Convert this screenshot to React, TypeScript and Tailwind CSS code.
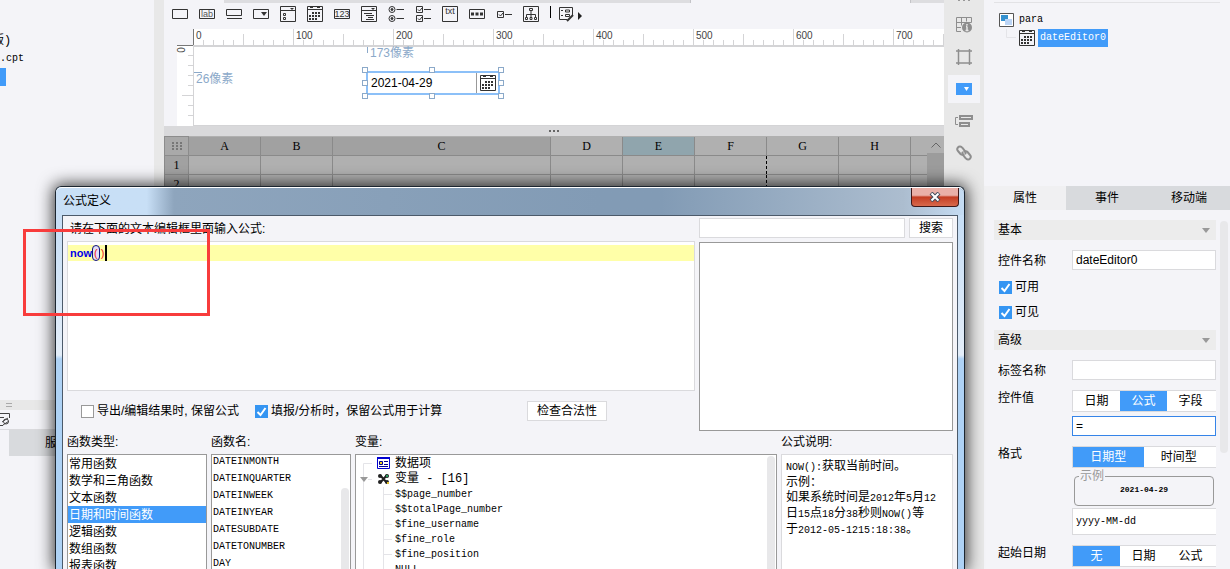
import { useState } from 'react'
import type { ReactNode } from 'react'

const MONO = "font-['Liberation_Mono','Noto_Sans_CJK_SC',monospace]"

const functionTypes = [
  '常用函数',
  '数学和三角函数',
  '文本函数',
  '日期和时间函数',
  '逻辑函数',
  '数组函数',
  '报表函数'
]

const functionNames = [
  'DATEINMONTH',
  'DATEINQUARTER',
  'DATEINWEEK',
  'DATEINYEAR',
  'DATESUBDATE',
  'DATETONUMBER',
  'DAY'
]

const variables = [
  '$$page_number',
  '$$totalPage_number',
  '$fine_username',
  '$fine_role',
  '$fine_position',
  'NULL'
]

const columns = [
  { name: 'A', width: 'w-[72px]', color: 'bg-[#a1a1a1]' },
  { name: 'B', width: 'w-[72px]', color: 'bg-[#a1a1a1]' },
  { name: 'C', width: 'w-[218px]', color: 'bg-[#a1a1a1]' },
  { name: 'D', width: 'w-[72px]', color: 'bg-[#b0b0b0]' },
  { name: 'E', width: 'w-[72px]', color: 'bg-[#90a5ad]' },
  { name: 'F', width: 'w-[72px]', color: 'bg-[#b0b0b0]' },
  { name: 'G', width: 'w-[72px]', color: 'bg-[#b0b0b0]' },
  { name: 'H', width: 'w-[72px]', color: 'bg-[#b0b0b0]' }
]

function Icon({ children }: { children: ReactNode }) {
  return (
    <svg
      width="16"
      height="16"
      viewBox="0 0 16 16"
      fill="none"
      stroke="#333"
      className="block shrink-0"
    >
      {children}
    </svg>
  )
}

function CalendarIcon() {
  return (
    <Icon>
      <path d="M.5.5h15v15H.5zM.5 3.500h15" />
      <path d="M3 1.500h3M10 1.500h3" />
      <path
        d="M5 7h2M8 7h2M11 7h2M2 10h2M5 10h2M8 10h2M11 10h2M2 13h2M5 13h2M8 13h2"
        strokeWidth="2"
      />
    </Icon>
  )
}

const widgetTools: { label: string; icon: ReactNode }[] = [
  {
    label: '文本',
    icon: (
      <Icon>
        <path d="M.5 3.5h15v9H.5z" />
      </Icon>
    )
  },
  {
    label: '标签',
    icon: (
      <Icon>
        <path d="M.5 3.5h15v9H.5z" />
        <text x="8" y="11" textAnchor="middle" fontSize="9" fill="#555" stroke="none">
          lab
        </text>
      </Icon>
    )
  },
  {
    label: '按钮',
    icon: (
      <Icon>
        <path d="M.5 3.5h15v6H.5zM1 12.5h15" />
      </Icon>
    )
  },
  {
    label: '下拉框',
    icon: (
      <Icon>
        <path d="M.5 3.5h15v9H.5z" />
        <path d="M8 6h6l-3 4z" fill="#333" stroke="none" />
      </Icon>
    )
  },
  {
    label: '下拉复选框',
    icon: (
      <Icon>
        <path d="M.5.5h15v15H.5zM.5 4.5h15M3.5 7.5h2v2h-2zM3.5 11.5h2v2h-2z" />
        <path d="M10 2h4l-2 2z" fill="#333" stroke="none" />
      </Icon>
    )
  },
  { label: '日期', icon: <CalendarIcon /> },
  {
    label: '数字',
    icon: (
      <Icon>
        <path d="M.5 3.5h15v9H.5z" />
        <text x="8" y="11" textAnchor="middle" fontSize="9" fill="#333" stroke="none">
          123
        </text>
      </Icon>
    )
  },
  {
    label: '下拉树',
    icon: (
      <Icon>
        <path d="M.5.5h15v15H.5zM.5 4.5h15M3 7.5h8M5 9.5h8M7 11.5h5M5 13.5h8" />
        <path d="M10 2h4l-2 2z" fill="#333" stroke="none" />
      </Icon>
    )
  },
  {
    label: '单选按钮组',
    icon: (
      <Icon>
        <circle cx="4" cy="3.5" r="3" />
        <circle cx="4" cy="3.5" r="1" fill="#333" />
        <circle cx="4" cy="12.5" r="3" />
        <circle cx="4" cy="12.5" r="1" fill="#333" />
        <path d="M8.500 3.500H16M8.500 12.500H16" />
      </Icon>
    )
  },
  {
    label: '复选框组',
    icon: (
      <Icon>
        <path d="M1.500.5h6v6h-6zM1.500 9.500h6v6h-6zM9 3.500h7M9 12.500h7M3 3.500l1.500 1.500L7 2M3 12.500l1.500 1.500L7 11" />
      </Icon>
    )
  },
  {
    label: '文本域',
    icon: (
      <Icon>
        <path d="M.5.5h15v15H.5z" />
        <text x="8" y="8" textAnchor="middle" fontSize="9" fill="#333" stroke="none">
          txt
        </text>
      </Icon>
    )
  },
  {
    label: '密码',
    icon: (
      <Icon>
        <path d="M.5 3.5h15v9H.5z" />
        <path d="M2 8h3M6.500 8h3M11 8h3" strokeWidth="3" />
      </Icon>
    )
  },
  {
    label: '复选框',
    icon: (
      <Icon>
        <path d="M1.500 5.500h6v6h-6zM9 8.500h7M3 8.500l1.500 1.500L7 7" />
      </Icon>
    )
  },
  {
    label: '视图树',
    icon: (
      <Icon>
        <path d="M.5.5h15v15H.5zM6.500 2.500h3v2h-3zM8 5v3M3.500 11V8.500h9V11M8 8v3M2.500 11.500h2v2h-2zM7 11.500h2v2H7zM11.500 11.500h2v2h-2z" />
      </Icon>
    )
  }
]

function Ruler() {
  return (
    <div className="flex h-[18px] overflow-hidden border-b-2 border-[#d4d4d6] bg-white">
      {[0, 100, 200, 300, 400, 500, 600, 700].map((n) => (
        <div
          key={n}
          className="relative h-4 w-[100px] shrink-0 text-[10px] leading-[14px] text-[#444]"
        >
          <svg width="100" height="16" className="absolute inset-0" stroke="#d4d4d6">
            <path d="M10.500 11v5M20.500 11v5M30.500 11v5M40.500 11v5M50.500 5v11M60.500 11v5M70.500 11v5M80.500 11v5M90.500 11v5" />
            <path d="M.5 0v16" stroke={n === 0 ? '#777' : '#d4d4d6'} />
          </svg>
          <span className="pl-[3px]">{n}</span>
        </div>
      ))}
    </div>
  )
}

function Handle({ place }: { place: string }) {
  return (
    <span
      className={`absolute size-1.5 border border-[#8ba9c9] bg-white ${place}`}
    />
  )
}

function DesignCanvas() {
  return (
    <div className="flex h-24 pl-[13px]">
      <div className="relative w-4 shrink-0 bg-white">
        <svg width="16" height="80" stroke="#d4d4d6" className="block">
          <path d="M0 .5h16" stroke="#777" />
          <path d="M11 10.500h5M11 20.500h5M11 30.500h5M11 40.500h5M5 50.500h11M11 60.500h5M11 70.500h5" />
        </svg>
        <span className="absolute top-0 left-0.5 -rotate-90 text-[10px] leading-[10px] text-[#444]">
          0
        </span>
      </div>
      <div className="flex min-w-0 flex-1 flex-col">
        {/* free canvas: items are placed where the user dropped them */}
        <div className="relative h-[81px] border-t-2 border-b border-l border-[#d4d4d6] bg-white">
          <span className="absolute top-0 left-[173px] h-1.5 w-px bg-[#8ba9c9]" />
          <span className="absolute -top-0.5 left-[176px] text-[12px] leading-4 text-[#8ba9c9]">
            173像素
          </span>
          <span className="absolute top-[25px] left-0 h-px w-2 bg-[#8ba9c9]" />
          <span className="absolute top-6 left-0.5 text-[12px] leading-4 text-[#8ba9c9]">
            26像素
          </span>
          <div className="absolute top-6 left-[172px] flex h-6 w-[134px] border-2 border-[#8cc0f8] bg-white">
            <input
              aria-label="日期控件"
              defaultValue="2021-04-29"
              className="min-w-0 flex-1 px-[3px] text-[12px] outline-none"
            />
            <button
              aria-label="选择日期"
              className="flex w-[22px] items-center justify-center border-l border-[#999]"
            >
              <CalendarIcon />
            </button>
            <Handle place="-top-1.5 -left-1.5" />
            <Handle place="-top-1.5 left-[61px]" />
            <Handle place="-top-1.5 -right-1.5" />
            <Handle place="top-[7px] -left-1.5" />
            <Handle place="top-[7px] -right-1.5" />
            <Handle place="-bottom-1.5 -left-1.5" />
            <Handle place="-bottom-1.5 left-[61px]" />
            <Handle place="-bottom-1.5 -right-1.5" />
          </div>
        </div>
      </div>
    </div>
  )
}

function Sheet() {
  return (
    <div className="flex min-h-0 flex-1 overflow-hidden bg-[#b0b0b0]">
      <table className="h-14 w-full table-fixed border-collapse font-['Liberation_Serif',serif] text-[12px] leading-4">
        <thead>
          <tr className="h-[19px]">
            <th className="w-6 border border-[#8c8c8c] bg-[#a9a9a9] p-0">
              <svg width="10" height="8" className="mx-auto block" fill="#777">
                <path d="M0 0h2v2H0zM4 0h2v2H4zM8 0h2v2H8zM0 3h2v2H0zM4 3h2v2H4zM8 3h2v2H8zM0 6h2v2H0zM4 6h2v2H4zM8 6h2v2H8z" />
              </svg>
            </th>
            {columns.map((c) => (
              <th
                key={c.name}
                className={`border border-t-0 border-[#8a8a8a] p-0 font-normal ${c.width} ${c.color}`}
              >
                {c.name}
              </th>
            ))}
            <th className="border-b border-[#8a8a8a] p-0" />
          </tr>
        </thead>
        <tbody>
          {[1, 2].map((row) => (
            <tr key={row} className="h-[19px]">
              <th className="border border-[#8a8a8a] bg-[#a1a1a1] p-0 font-normal">
                {row}
              </th>
              {columns.map((c) => (
                <td
                  key={c.name}
                  className={
                    c.name === 'G'
                      ? 'border border-[#8a8a8a] border-l-black [border-left-style:dashed]'
                      : c.name === 'F'
                        ? 'border border-r-0 border-[#8a8a8a]'
                        : 'border border-[#8a8a8a]'
                  }
                />
              ))}
              <td className="border-b border-[#8a8a8a]" />
            </tr>
          ))}
        </tbody>
      </table>
      <div className="w-[17px] shrink-0 bg-[#9c9c9c]">
        <button
          aria-label="向上滚动"
          className="flex h-[17px] w-full items-center justify-center bg-[#b0b0b0]"
        >
          <svg width="10" height="6" fill="none" stroke="#666">
            <path d="M.5 5.500l4.500-4.500 4.500 4.500" />
          </svg>
        </button>
      </div>
    </div>
  )
}

function SideTools() {
  const base = 'flex h-7 w-8 items-center justify-center'
  return (
    <nav className="flex w-10 shrink-0 flex-col items-center gap-1 bg-[#e8e8e8]">
      <svg width="12" height="7" className="block" fill="#999">
        <path d="M0 0h2v1H0zM5 0h2v1H5zM10 0h2v1h-2z" />
      </svg>
      <button aria-label="单元格属性" className={base}>
        <svg width="16" height="16" fill="none" stroke="#8e8e8e">
          <path d="M5 14.500H.5V.5h15v5M.5 5.500h15M.5 10.500H5M5.500.5v8M10.500.5v4" />
          <circle cx="11" cy="10.500" r="5" fill="#8e8e8e" stroke="none" />
          <path d="M11 7v1.500M11 9.500v4M9.500 13.500h3M10 9.500h1" stroke="#e8e8e8" strokeWidth="1.500" />
        </svg>
      </button>
      <button aria-label="悬浮元素" className={base}>
        <svg width="16" height="16" fill="none" stroke="#8e8e8e">
          <path d="M2.500 0v16M13.500 0v16M0 2h16M0 14h16" strokeWidth="1.500" />
        </svg>
      </button>
      <button aria-label="控件设置" className={`${base} bg-[#f4f4f8]`}>
        <svg width="16" height="12">
          <path d="M0 0h16v12H0z" fill="#419bf9" />
          <path d="M8 4h5l-2.500 4z" fill="#fff" />
        </svg>
      </button>
      <button aria-label="条件属性" className={base}>
        <svg width="18" height="14" fill="none" stroke="#8e8e8e">
          <path d="M3 3.500H.5v7H3" />
          <path d="M5 2h12v3H5zM5 9h9v3H5z" strokeWidth="2" />
        </svg>
      </button>
      <button aria-label="超级链接" className={base}>
        <svg
          width="16"
          height="16"
          fill="none"
          stroke="#8e8e8e"
          strokeWidth="2"
          strokeLinecap="round"
        >
          <path d="M9.500 8.500a3 3 0 0 0-.5-2.500L6.500 3C5 1 3 1 2 2.300S1 5 2 6l2.500 3c1 1 2 1 3 .5" />
          <path d="M6.500 7.500a3 3 0 0 0 .5 2.500l2.500 3c1.500 2 3.500 2 4.500.7s1-2.700 0-3.700l-2.500-3c-1-1-2-1-3-.5" />
        </svg>
      </button>
    </nav>
  )
}

function Checkbox({ label, checked }: { label: string; checked?: boolean }) {
  return (
    <label className="flex items-center gap-[3px] text-[12px] leading-4">
      <span className="relative flex">
        <input
          type="checkbox"
          defaultChecked={checked}
          className="peer size-[13px] appearance-none border border-[#999] bg-white checked:border-[#3595f2] checked:bg-[#3595f2]"
        />
        <svg
          width="13"
          height="13"
          fill="none"
          stroke="#fff"
          strokeWidth="2"
          className="pointer-events-none invisible absolute inset-0 peer-checked:visible"
        >
          <path d="M2.500 7l3 3L10.500 3" />
        </svg>
      </span>
      {label}
    </label>
  )
}

function Segmented({ options, active }: { options: string[]; active: string }) {
  const [value, setValue] = useState(active)
  return (
    <div className="flex h-[22px] border border-r-0 border-[#dadadd] bg-white pr-0.5">
      {options.map((option) => (
        <button
          key={option}
          onClick={() => setValue(option)}
          className={
            option === value
              ? 'flex-1 bg-[#419bf9] text-[12px] leading-4 text-white'
              : 'flex-1 text-[12px] leading-4'
          }
        >
          {option}
        </button>
      ))}
    </div>
  )
}

function SectionTitle({ children }: { children: ReactNode }) {
  return (
    <button className="flex h-5 w-full items-center justify-between bg-[#ececec] pr-1.5 pl-1 text-[12px] leading-4">
      {children}
      <svg width="8" height="5" fill="#999">
        <path d="M0 0h8l-4 5z" />
      </svg>
    </button>
  )
}

function FormRow({
  label,
  tall,
  children
}: {
  label: string
  tall?: boolean
  children: ReactNode
}) {
  return (
    <div className="flex" role="group" aria-label={label}>
      <span
        className={
          tall
            ? 'w-[78px] shrink-0 pl-1 text-[12px] leading-4'
            : 'w-[78px] shrink-0 pl-1 text-[12px] leading-[22px]'
        }
      >
        {label}
      </span>
      <div className="flex min-w-0 flex-1 flex-col">{children}</div>
    </div>
  )
}

function PropertyPanel() {
  const input = 'h-5 w-full border border-[#dadadd] bg-white px-[3px] text-[12px] outline-none'
  return (
    <aside className="flex w-[246px] shrink-0 flex-col bg-[#f4f4f8]">
      <div className="h-[186px] shrink-0 px-2.5 pt-0.5">
        <div className={`border-t border-[#e2e2e5] pt-2 pl-[5px] text-[10px] leading-[18px] ${MONO}`}>
          <div className="flex items-center gap-1">
            <svg width="16" height="16" className="shrink-0">
              <path d="M.5 1.500h14v13H.5z" fill="#fff" stroke="#555" />
              <path d="M2 3h7v6H2z" fill="#3390cf" />
              <path d="M6 7h7v6H6z" fill="#bbd4f5" />
            </svg>
            <span>para</span>
          </div>
          <div className="flex items-center gap-[3px] pl-1.5">
            <svg width="11" height="18" fill="none" stroke="#e4e4e8" className="shrink-0">
              <path d="M1.500 0v8.500H11" />
            </svg>
            <CalendarIcon />
            <span className="bg-[#419bf9] px-0.5 text-white">dateEditor0</span>
          </div>
        </div>
      </div>

      <div className="flex h-6 shrink-0 text-[12px] leading-4" role="tablist">
        <button role="tab" aria-selected className="flex-1 bg-[#f0f0f2]">
          属性
        </button>
        <button role="tab" className="flex-1 bg-[#d8dadd]">
          事件
        </button>
        <button role="tab" className="flex-1 bg-[#d8dadd]">
          移动端
        </button>
      </div>

      <div className="flex min-h-0 flex-1 gap-1 overflow-hidden pt-2.5 pr-0.5 pl-2.5">
        <div className="min-w-0 flex-1">
          <SectionTitle>基本</SectionTitle>
          <div className="h-[90px] pt-2.5">
            <FormRow label="控件名称">
              <input aria-label="控件名称" defaultValue="dateEditor0" className={input} />
            </FormRow>
            <div className="flex flex-col gap-[9px] pt-[7px] pl-[5px]">
              <Checkbox label="可用" checked />
              <Checkbox label="可见" checked />
            </div>
          </div>
          <SectionTitle>高级</SectionTitle>
          <div className="flex flex-col gap-2 pt-2.5">
            <FormRow label="标签名称">
              <input aria-label="标签名称" className={input} />
            </FormRow>
            <FormRow label="控件值" tall>
              <Segmented options={['日期', '公式', '字段']} active="公式" />
              <input
                aria-label="控件值"
                defaultValue="="
                className="mt-1 mb-0.5 h-5 w-full border border-[#3584e8] bg-white px-[3px] text-[12px] outline-none"
              />
            </FormRow>
            <FormRow label="格式" tall>
              <Segmented options={['日期型', '时间型']} active="日期型" />
              <fieldset className="mx-0.5 h-[38px] rounded border border-[#999]">
                <legend className="ml-1 px-px text-[12px] leading-4 text-[#999]">示例</legend>
                <p className={`text-center text-[8px] leading-3 font-bold ${MONO}`}>
                  2021-04-29
                </p>
              </fieldset>
              <input
                aria-label="日期格式"
                defaultValue="yyyy-MM-dd"
                className={`mt-0.5 mb-0.5 h-[27px] w-full border border-r-0 border-[#dadadd] bg-white px-[3px] text-[10px] outline-none ${MONO}`}
              />
            </FormRow>
            <FormRow label="起始日期" tall>
              <Segmented options={['无', '日期', '公式']} active="无" />
            </FormRow>
          </div>
        </div>
        <div className="mt-px h-[232px] w-2 rounded bg-[#e8e8ea]" />
      </div>
    </aside>
  )
}

function FormulaEditor() {
  const [formula, setFormula] = useState('now()')
  return (
    <div className="relative h-[150px] border border-[#dadadd] bg-white pt-[3px]">
      <div className="flex h-4 items-center bg-[#ffffa8] pl-0.5 text-[11px] leading-[14px] text-[#f02020]">
        <b className="text-[#0000e8]">now</b>
        <span className="rounded-full border border-[#101080] bg-[#e0e0f8] px-px">(</span>
        <span className="px-px">)</span>
        <span className="h-4 w-0.5 bg-black" />
      </div>
      <textarea
        aria-label="公式"
        value={formula}
        onChange={(e) => setFormula(e.target.value)}
        className="absolute inset-0 size-full resize-none bg-transparent px-0.5 py-[3px] text-[11px] leading-4 text-transparent caret-transparent outline-none"
      />
    </div>
  )
}

function FormulaDialog() {
  const [type, setType] = useState('日期和时间函数')
  const whiteButton = 'border border-[#dadadd] bg-white text-[12px] leading-4'
  const list = 'min-h-0 flex-1 overflow-hidden border border-b-0 border-[#999] bg-white'
  return (
    <section
      role="dialog"
      aria-label="公式定义"
      className="absolute top-[186px] right-[265px] bottom-0 left-[55px] flex flex-col rounded-t-md border border-b-0 border-[#1c2630] bg-linear-to-b from-[#c8dff6] from-10% via-[#e4eef9] via-44% to-[#aed2f5] to-45% shadow-[0_0_16px_2px_rgba(0,0,0,0.75)]"
    >
      <header className="flex h-7 shrink-0 items-start justify-between rounded-t-md border-t border-white bg-linear-to-r from-[#c8dff6] from-10% via-[#8ea5bd] via-13% to-[#829bb5] to-60%">
        <h1 className="pl-[7px] text-[12px] leading-[26px]">公式定义</h1>
        <div className="flex h-full w-1/3 justify-end rounded-tr-md bg-linear-to-r from-[#829bb5] via-[#acbdcf] via-80% to-[#c5dcf3] pr-[5px]">
          <button
            aria-label="关闭"
            className="flex h-[19px] w-12 items-center justify-center rounded-b border border-t-0 border-[#401818] bg-linear-to-b from-[#eab0a8] from-40% via-[#c43c22] via-50% to-[#d8694c]"
          >
            <svg width="12" height="10" fill="none">
              <path d="M2 1l8 8M10 1l-8 8" stroke="#444c5c" strokeWidth="4" />
              <path d="M2.500 1.500l7 7M9.500 1.500l-7 7" stroke="#fff" strokeWidth="2" />
            </svg>
          </button>
        </div>
      </header>

      <div className="mx-1.5 flex min-h-0 flex-1 flex-col overflow-hidden border border-b-0 border-[#4c5a6a] bg-[#f4f4f8] px-1">
        <div className="flex gap-1">
          <div className="min-w-0 flex-1">
            <p className="h-[25px] pl-[3px] text-[12px] leading-[26px]">
              请在下面的文本编辑框里面输入公式:
            </p>
            <FormulaEditor />
            <div className="flex h-10 items-center gap-4 pl-3.5">
              <Checkbox label="导出/编辑结果时, 保留公式" />
              <Checkbox label="填报/分析时，保留公式用于计算" checked />
              <button className={`mr-[88px] ml-auto h-5 w-20 ${whiteButton}`}>
                检查合法性
              </button>
            </div>
          </div>
          <div className="flex w-[254px] shrink-0 flex-col gap-1 pt-0.5">
            <div className="flex h-5 gap-1">
              <input
                aria-label="搜索函数"
                className="min-w-0 flex-1 border border-[#dadadd] bg-white px-[3px] text-[12px] outline-none"
              />
              <button className={`w-11 ${whiteButton}`}>搜索</button>
            </div>
            <div className="flex-1 border border-[#999] bg-white" />
          </div>
        </div>

        <div className="flex min-h-0 flex-1 gap-1 text-[12px]">
          <div className="flex w-[140px] shrink-0 flex-col">
            <h2 className="leading-[23px]">函数类型:</h2>
            <ul className={list}>
              {functionTypes.map((name) => (
                <li key={name}>
                  <button
                    onClick={() => setType(name)}
                    className={
                      name === type
                        ? 'block h-[17px] w-full bg-[#419bf9] px-px text-left leading-[18px] text-white'
                        : 'block h-[17px] w-full px-px text-left leading-[18px]'
                    }
                  >
                    {name}
                  </button>
                </li>
              ))}
            </ul>
          </div>
          <div className="flex w-[140px] shrink-0 flex-col">
            <h2 className="leading-[23px]">函数名:</h2>
            <div className={`flex justify-between ${list}`}>
              <ul className={`pl-px text-[10px] ${MONO}`}>
                {functionNames.map((name) => (
                  <li key={name} className="h-[17px] leading-[14px]">
                    {name}
                  </li>
                ))}
              </ul>
              <div className="mt-[33px] mr-px w-2 rounded-t bg-[#e8e8ea]" />
            </div>
          </div>
          <div className="flex min-w-0 flex-1 flex-col">
            <h2 className="leading-[23px]">变量:</h2>
            <div className={`flex justify-between ${list}`}>
              <ul className="pl-1">
                <li className="flex h-4 items-center gap-[5px] leading-4">
                  <svg width="12" height="16" fill="none" stroke="#e4e4e8">
                    <path d="M3.500 16V8.500H12" />
                  </svg>
                  <svg width="13" height="12">
                    <path d="M.5.5h12v11H.5z" fill="#fff" stroke="#0000d0" />
                    <path d="M0 1h13" stroke="#0000d0" strokeWidth="2" />
                    <path d="M2.500 4.500h3v3h-3z" fill="#f0d820" stroke="#000090" />
                    <path d="M7 4.500h4M7 7.500h4M2 9.500h9" stroke="#000090" />
                  </svg>
                  数据项
                </li>
                <li className="flex h-4 items-center gap-[5px] leading-4">
                  <svg width="12" height="16">
                    <path d="M3.500 0v16M8 8.500h4" stroke="#e4e4e8" />
                    <path d="M0 6h8l-4 5z" fill="#999" />
                  </svg>
                  <svg width="13" height="12" fill="#222">
                    <path d="M3 2l7 8M10 2l-7 8" stroke="#222" strokeWidth="2" />
                    <circle cx="3" cy="3" r="2" />
                    <circle cx="10" cy="3" r="2" />
                    <circle cx="3" cy="9" r="2" />
                    <circle cx="10" cy="9" r="2" />
                    <path d="M9 2h2v2H9z" fill="#2a9a60" />
                    <path d="M10 9h2v2h-2z" fill="#e0c030" />
                  </svg>
                  <span className={MONO}>变量 - [16]</span>
                </li>
                {variables.map((name) => (
                  <li
                    key={name}
                    className={`flex h-[15px] gap-[3px] text-[10px] leading-[15px] ${MONO}`}
                  >
                    <svg width="32" height="15" stroke="#e4e4e8">
                      <path d="M3.500 0v15M23.500 0v15M24 7.500h8" />
                    </svg>
                    {name}
                  </li>
                ))}
              </ul>
              <div className="mt-px mr-px w-2 rounded-t bg-[#e8e8ea]" />
            </div>
          </div>
          <div className="flex w-[172px] shrink-0 flex-col">
            <h2 className="leading-[23px]">公式说明:</h2>
            <p className="min-h-0 flex-1 overflow-hidden border border-b-0 border-[#dadadd] bg-white px-1 pt-1 leading-[15px] whitespace-nowrap">
              <span className={`text-[10px] ${MONO}`}>NOW():</span>获取当前时间。
              <br />
              示例：
              <br />
              如果系统时间是<span className={`text-[10px] ${MONO}`}>2012</span>年
              <span className={`text-[10px] ${MONO}`}>5</span>月
              <span className={`text-[10px] ${MONO}`}>12</span>
              <br />日<span className={`text-[10px] ${MONO}`}>15</span>点
              <span className={`text-[10px] ${MONO}`}>18</span>分
              <span className={`text-[10px] ${MONO}`}>38</span>秒则
              <span className={`text-[10px] ${MONO}`}>NOW()</span>等
              <br />于<span className={`text-[10px] ${MONO}`}>2012-05-1215:18:38</span>。
            </p>
          </div>
        </div>
      </div>
    </section>
  )
}

export default function App() {
  return (
    <div className="relative flex h-screen overflow-hidden bg-[#f4f4f8] font-['Liberation_Sans','Noto_Sans_CJK_SC',sans-serif] text-[12px] text-black">
      <aside className="flex w-[154px] shrink-0 flex-col overflow-hidden">
        <div className={`flex-1 pt-8 text-[10px] ${MONO}`}>
          <p className="-ml-2 text-[12px] leading-[18px]">版)</p>
          <p className="leading-[18px]">.cpt</p>
          <div className="h-[18px] w-1.5 bg-[#419bf9]" />
        </div>
        <div className="flex h-2.5 shrink-0 items-center bg-[#e8e8e8] pl-1.5">
          <svg width="6" height="4" stroke="#aaa">
            <path d="M0 .5h6M0 3.500h6" />
          </svg>
        </div>
        <div className="flex h-5 shrink-0 items-center border-b border-[#dadadd]">
          <svg width="10" height="13" fill="none" stroke="#444">
            <path d="M0 .5h9.500V5M0 4.500h4M2 9l6-4M3 12l6-4M0 12.500h3" />
            <circle cx="6" cy="8.500" r="2.500" />
          </svg>
        </div>
        <div className="mb-[113px] flex h-[26px] shrink-0 pl-[9px] leading-[26px]">
          <button className="flex-1 bg-[#d8dadd] pl-9 text-left">服</button>
        </div>
      </aside>
      <div className="w-2.5 shrink-0 bg-[#e8e8e8]" />

      <main className="flex min-w-0 flex-1 flex-col">
        <div className="flex h-[3px] shrink-0 justify-between pl-[60px]">
          <div className="w-[467px] border-r border-[#c4c4c8] bg-[#dddde0]" />
          <div className="w-[34px] border-l border-[#c4c4c8] bg-[#dddde0]" />
        </div>
        <div className="flex h-[26px] shrink-0 gap-[11px] pt-[3px] pl-2">
          {widgetTools.map((tool) => (
            <button key={tool.label} aria-label={tool.label} className="h-4">
              {tool.icon}
            </button>
          ))}
          <div className="h-3 w-px bg-black" />
          <button aria-label="更多控件" className="-ml-1 flex h-4 items-center gap-1">
            <Icon>
              <path d="M9 13.500H1.500v-12h13V9M3 4.500h2M3 9.500h2M7.500 4h4v2h-4zM7.500 8.500h4v2h-4z" />
              <path d="M9 15l6-6" strokeWidth="2" />
            </Icon>
            <svg width="4" height="8" className="mt-1">
              <path d="M0 0l4 4-4 4z" fill="#222" />
            </svg>
          </button>
        </div>
        <div className="shrink-0 pl-[29px]">
          <Ruler />
        </div>
        <div className="-mt-0.5 h-[81px] shrink-0 overflow-hidden">
          <DesignCanvas />
        </div>
        <div className="flex h-2.5 shrink-0 items-center justify-center bg-[#d9d9db]">
          <svg width="10" height="2" fill="#666">
            <path d="M0 0h2v2H0zM4 0h2v2H4zM8 0h2v2H8z" />
          </svg>
        </div>
        <Sheet />
      </main>

      <SideTools />
      <PropertyPanel />
      <FormulaDialog />
      <div className="pointer-events-none absolute top-[229px] left-[23px] h-[87px] w-[187px] border-3 border-[#f83c3c]" />
    </div>
  )
}
